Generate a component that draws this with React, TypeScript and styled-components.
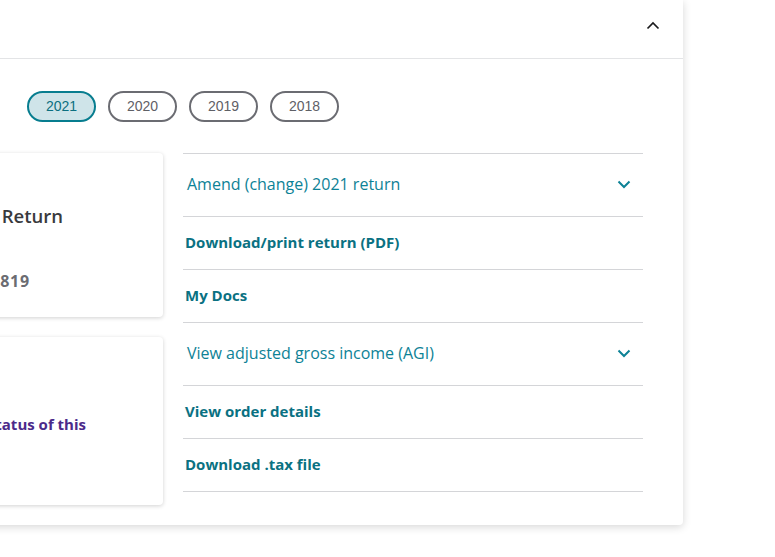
import React from "react";
import styled, { createGlobalStyle } from "styled-components";

const Global = createGlobalStyle`
  html, body { margin: 0; padding: 0; background: #ffffff; overflow: hidden; }
  body { font-family: "Open Sans", "Lato", sans-serif; }
  * { box-sizing: border-box; }
`;

const Page = styled.div`
  width: 775px;
  height: 557px;
  overflow: hidden;
  position: relative;
`;

const Panel = styled.section`
  margin-left: -200px;
  width: 883px;
  background: #fff;
  border-radius: 0 0 4px 4px;
  box-shadow: 0 2px 8px rgba(0, 0, 0, 0.16);
  display: flex;
  flex-direction: column;
`;

const Header = styled.div`
  height: 59px;
  border-bottom: 1px solid #e3e4e6;
  display: flex;
  align-items: center;
  justify-content: flex-end;
  padding-right: 23px;
`;

const IconButton = styled.button`
  border: 0;
  background: none;
  padding: 0;
  width: 14px;
  height: 14px;
  display: flex;
  align-items: center;
  justify-content: center;
  margin-top: -7px;
`;

const Body = styled.div`
  padding: 32px 40px 20px 40px;
  display: flex;
  flex-direction: column;
  gap: 31px;
`;

const YearRow = styled.div`
  display: flex;
  gap: 12px;
  padding-left: 187px;
`;

const YearPill = styled.button<{ $active?: boolean }>`
  width: 69px;
  height: 31px;
  border-radius: 16px;
  border: 2px solid ${(p) => (p.$active ? "#077d8f" : "#6b6c72")};
  background: ${(p) => (p.$active ? "#cfe4e9" : "#fff")};
  color: ${(p) => (p.$active ? "#0b6f80" : "#5f6066")};
  font-family: "Liberation Sans", Arial, sans-serif;
  font-size: 14px;
  padding: 0 0 1px;
  display: flex;
  align-items: center;
  justify-content: center;
`;

const Columns = styled.div`
  display: flex;
  gap: 20px;
  align-items: flex-start;
`;

const CardColumn = styled.div`
  width: 323px;
  display: flex;
  flex-direction: column;
  gap: 20px;
`;

const Card = styled.div<{ $h: number }>`
  height: ${(p) => p.$h}px;
  background: #fff;
  border-radius: 4px;
  box-shadow: 0 1px 4px rgba(0, 0, 0, 0.18);
  display: flex;
  flex-direction: column;
  align-items: flex-end;
`;

const CardTitle = styled.div`
  margin-top: 50px;
  margin-right: 100px;
  font-size: 18.5px;
  font-weight: 600;
  color: #393a3d;
  white-space: nowrap;
`;

const CardMeta = styled.div`
  margin-top: 42px;
  margin-right: 133px;
  font-size: 16px;
  letter-spacing: 0.8px;
  font-weight: 700;
  color: #6b6c72;
  white-space: nowrap;
`;

const CardLink = styled.div`
  margin-top: 77px;
  margin-right: 77px;
  font-size: 15px;
  font-weight: 700;
  color: #4b2a8a;
  white-space: nowrap;
`;

const LinkList = styled.ul`
  list-style: none;
  margin: 0;
  padding: 0;
  width: 460px;
  border-top: 1px solid #d4d5d8;
`;

const Row = styled.li<{ $tall?: boolean }>`
  height: ${(p) => (p.$tall ? 63 : 53)}px;
  border-bottom: 1px solid #d4d5d8;
  display: flex;
  align-items: center;
  justify-content: space-between;
  padding: 0 12px 2px ${(p) => (p.$tall ? 4 : 2)}px;
`;

const RowText = styled.span<{ $bold?: boolean }>`
  color: ${(p) => (p.$bold ? "#0a7182" : "#0d8296")};
  font-size: ${(p) => (p.$bold ? "15px" : "16px")};
  font-weight: ${(p) => (p.$bold ? 700 : 400)};
`;

const Chevron = ({ up, color }: { up?: boolean; color: string }) => (
  <svg width="14" height="9" viewBox="0 0 14 9" fill="none">
    <path
      d={up ? "M1.5 7.5 L7 2 L12.5 7.5" : "M1.5 1.5 L7 7 L12.5 1.5"}
      stroke={color}
      strokeWidth={up ? 1.7 : 2}
    />
  </svg>
);

const rows: { text: string; accordion?: boolean }[] = [
  { text: "Amend (change) 2021 return", accordion: true },
  { text: "Download/print return (PDF)" },
  { text: "My Docs" },
  { text: "View adjusted gross income (AGI)", accordion: true },
  { text: "View order details" },
  { text: "Download .tax file" },
];

export default function App() {
  return (
    <Page>
      <Global />
      <Panel>
        <Header>
          <IconButton aria-label="Collapse">
            <Chevron up color="#1b1b1d" />
          </IconButton>
        </Header>
        <Body>
          <YearRow>
            <YearPill $active>2021</YearPill>
            <YearPill>2020</YearPill>
            <YearPill>2019</YearPill>
            <YearPill>2018</YearPill>
          </YearRow>
          <Columns>
            <CardColumn>
              <Card $h={164}>
                <CardTitle>2021 Federal Tax Return</CardTitle>
                <CardMeta>Order # 12345 819</CardMeta>
              </Card>
              <Card $h={168}>
                <CardLink>Check the e-file status of this</CardLink>
              </Card>
            </CardColumn>
            <LinkList>
              {rows.map((r) => (
                <Row key={r.text} $tall={r.accordion}>
                  <RowText $bold={!r.accordion}>{r.text}</RowText>
                  {r.accordion && <Chevron color="#0d8296" />}
                </Row>
              ))}
            </LinkList>
          </Columns>
        </Body>
      </Panel>
    </Page>
  );
}
